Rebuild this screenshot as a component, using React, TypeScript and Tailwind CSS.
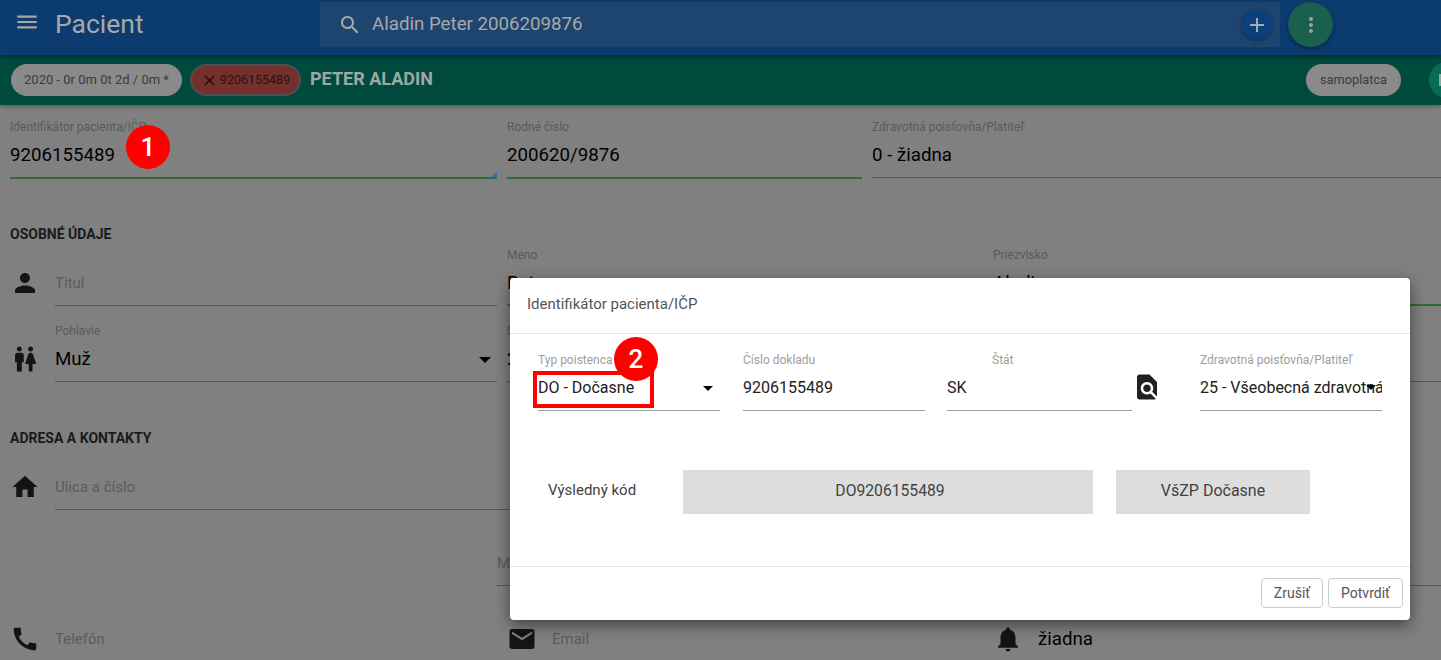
import type { ReactNode } from "react"

const font = "font-['Roboto',sans-serif]"

function Icon({ d, className }: { d: string; className: string }) {
  return (
    <svg viewBox="0 0 24 24" fill="currentColor" className={className}>
      <path d={d} />
    </svg>
  )
}

const icons = {
  menu: "M3 18h18v-2H3v2zm0-5h18v-2H3v2zm0-7v2h18V6H3z",
  search:
    "M15.5 14h-.79l-.28-.27C15.41 12.59 16 11.11 16 9.5 16 5.91 13.09 3 9.5 3S3 5.91 3 9.5 5.91 16 9.5 16c1.61 0 3.09-.59 4.23-1.57l.27.28v.79l5 4.99L20.49 19l-4.99-5zm-6 0C7.01 14 5 11.99 5 9.5S7.01 5 9.5 5 14 7.01 14 9.5 11.99 14 9.5 14z",
  add: "M19 13h-6v6h-2v-6H5v-2h6V5h2v6h6v2z",
  more: "M12 8c1.1 0 2-.9 2-2s-.9-2-2-2-2 .9-2 2 .9 2 2 2zm0 2c-1.1 0-2 .9-2 2s.9 2 2 2 2-.9 2-2-.9-2-2-2zm0 6c-1.1 0-2 .9-2 2s.9 2 2 2 2-.9 2-2-.9-2-2-2z",
  close:
    "M19 6.41L17.59 5 12 10.59 6.41 5 5 6.41 10.59 12 5 17.59 6.41 19 12 13.41 17.59 19 19 17.59 13.41 12z",
  person:
    "M12 12c2.21 0 4-1.79 4-4s-1.79-4-4-4-4 1.79-4 4 1.79 4 4 4zm0 2c-2.67 0-8 1.34-8 4v2h16v-2c0-2.66-5.33-4-8-4z",
  wc: "M5.5 22v-7.5H4V9c0-1.1.9-2 2-2h3c1.1 0 2 .9 2 2v5.5H9.5V22h-4zM18 22v-6h3l-2.54-7.63C18.18 7.55 17.42 7 16.56 7h-.12c-.86 0-1.63.55-1.9 1.37L12 16h3v6h3zM7.5 6c1.11 0 2-.89 2-2s-.89-2-2-2-2 .89-2 2 .89 2 2 2zm9 0c1.11 0 2-.89 2-2s-.89-2-2-2-2 .89-2 2 .89 2 2 2z",
  home: "M10 20v-6h4v6h5v-8h3L12 3 2 12h3v8z",
  phone:
    "M20.01 15.38c-1.23 0-2.42-.2-3.53-.56-.35-.12-.74-.03-1.01.24l-1.57 1.97c-2.83-1.35-5.48-3.9-6.89-6.83l1.95-1.66c.27-.28.35-.67.24-1.02-.37-1.11-.56-2.3-.56-3.53 0-.54-.45-.99-.99-.99H4.19C3.65 3 3 3.24 3 3.99 3 13.28 10.73 21 20.01 21c.71 0 .99-.63.99-1.18v-3.45c0-.54-.45-.99-.99-.99z",
  email:
    "M20 4H4c-1.1 0-1.99.9-1.99 2L2 18c0 1.1.9 2 2 2h16c1.1 0 2-.9 2-2V6c0-1.1-.9-2-2-2zm0 4l-8 5-8-5V6l8 5 8-5v2z",
  bell: "M12 22c1.1 0 2-.9 2-2h-4c0 1.1.89 2 2 2zm6-6v-5c0-3.07-1.64-5.64-4.5-6.32V4c0-.83-.67-1.5-1.5-1.5s-1.5.67-1.5 1.5v.68C7.63 5.36 6 7.92 6 11v5l-2 2v1h16v-1l-2-2z",
  find: "M20 19.59V8l-6-6H6c-1.1 0-1.99.9-1.99 2L4 20c0 1.1.89 2 1.99 2H18c.45 0 .85-.15 1.19-.4l-4.43-4.43c-.8.52-1.74.83-2.76.83-2.76 0-5-2.24-5-5s2.24-5 5-5 5 2.24 5 5c0 1.02-.31 1.96-.83 2.75L20 19.59zM9 13c0 1.66 1.34 3 3 3s3-1.34 3-3-1.34-3-3-3-3 1.34-3 3z",
}

function Caret({ className }: { className: string }) {
  return <div className={`h-0 w-0 border-x-[5px] border-t-[5px] border-x-transparent border-t-black ${className}`} />
}

function Field({
  label,
  value,
  placeholder,
  green,
  className,
  children,
}: {
  label?: string
  value?: string
  placeholder?: string
  green?: boolean
  className: string
  children?: ReactNode
}) {
  return (
    <div className={`relative h-[60px] ${green ? "border-b-2 border-[#2f6b34]" : "border-b border-[#555555]"} ${className}`}>
      <div className="h-4 text-[12px] leading-4 text-[#5a5a5a]">{label}</div>
      {value && <div className="mt-[6px] h-7 text-[18.7px] leading-7 text-black">{value}</div>}
      {placeholder && <div className="mt-[9px] text-[15px] leading-6 text-[#5c5c5c]">{placeholder}</div>}
      {children}
    </div>
  )
}

function RowIcon({ d, className }: { d: string; className: string }) {
  return <Icon d={d} className={`mt-[22px] size-[30px] shrink-0 text-[#141414] ${className}`} />
}

function DialogField({ label, value, className, labelClass, children }: { label: string; value: string; className: string; labelClass?: string; children?: ReactNode }) {
  return (
    <div className={`relative h-[59px] shrink-0 border-b border-[#9e9e9e] ${className}`}>
      <div className={`h-4 text-[12px] leading-4 text-[#9e9e9e] ${labelClass ?? ""}`}>{label}</div>
      <div className="mt-[8px] overflow-hidden whitespace-nowrap text-[16px] leading-6 text-[#212121]">{value}</div>
      {children}
    </div>
  )
}

function Badge({ n, className }: { n: string; className: string }) {
  return (
    <div className={`absolute z-30 flex size-[44px] items-center justify-center rounded-full bg-[#ff0000] text-[26px] font-medium text-white ${className}`}>
      {n}
    </div>
  )
}

export default function App() {
  return (
    <div className={`relative h-[660px] w-[1441px] overflow-hidden bg-[#808080] ${font}`}>
      {/* app bar */}
      <header className="relative z-[2] flex h-[55px] items-start bg-[#0c3b70] shadow-[0_2px_4px_rgba(0,0,0,0.35)]">
        <Icon d={icons.menu} className="ml-[14px] mt-[9px] size-[26px] shrink-0 text-[#a8a8a8]" />
        <div className="ml-[15px] w-[265px] text-[26.5px] leading-[47px] text-[#a8a8a8]">Pacient</div>
        <div className="mt-[2px] flex h-[45px] w-[960px] items-center bg-[#1e4570] pl-[18px] pr-2">
          <Icon d={icons.search} className="size-6 text-[#a8a8a8]" />
          <span className="ml-[10px] text-[18.7px] text-[#a8a8a8]">Aladin Peter 2006209876</span>
          <div className="ml-auto flex size-[30px] items-center justify-center rounded-full bg-[#0b3f7d] shadow-[0_1px_4px_rgba(0,0,0,0.4)]">
            <Icon d={icons.add} className="size-6 text-[#a8acb2]" />
          </div>
        </div>
        <div className="ml-[8px] mt-[2px] flex size-[45px] items-center justify-center rounded-full bg-[#19604f] shadow-[0_2px_4px_rgba(0,0,0,0.35)]">
          <Icon d={icons.more} className="size-6 text-[#a0a0a0]" />
        </div>
      </header>

      {/* patient strip */}
      <div className="relative z-[1] flex h-[50px] items-center bg-[#00493d] pl-[11px] shadow-[0_2px_4px_rgba(0,0,0,0.25)]">
        <div className="flex h-8 w-[171px] items-center justify-center rounded-full bg-[#8a8a8a] text-[13px] text-[#3a3a3a]">2020 - 0r 0m 0t 2d / 0m *</div>
        <div className="ml-2 flex h-8 w-[111px] items-center justify-center rounded-full border-2 border-[#4e4e50] bg-[#74302c] text-[12.5px] text-[#2a1210]">
          <Icon d={icons.close} className="mr-[2px] size-[17px] text-[#1e0f0d]" />
          9206155489
        </div>
        <div className="ml-[9px] mb-[3px] text-[18px] font-bold text-[#9ca8a4]">PETER ALADIN</div>
        <div className="ml-auto flex h-8 w-[95px] items-center justify-center rounded-full bg-[#8a8a8a] text-[12.8px] text-[#3a3a3a]">samoplatca</div>
        <div className="ml-[28px] mr-[-24px] flex size-9 shrink-0 items-center rounded-full bg-[#0a6a58] pl-[10px]">
          <div className="h-3 w-2 bg-[#8fa8a2]" />
        </div>
      </div>

      {/* form */}
      <main className="pl-[10px] pt-[14px]">
        <div className="flex gap-[10px]">
          <Field label="Identifikátor pacienta/IČP" value="9206155489" green className="w-[487px]">
            <div className="absolute bottom-0 right-0 h-0 w-0 border-b-[6px] border-l-[6px] border-b-[#3a72b0] border-l-transparent" />
          </Field>
          <Field label="Rodné číslo" value="200620/9876" green className="w-[355px]" />
          <Field label="Zdravotná poisťovňa/Platiteľ" value="0 - žiadna" className="flex-1 !h-[59px]" />
        </div>

        <h2 className="mt-[45px] text-[14px] font-bold leading-5 text-[#1a1a1a]">OSOBNÉ ÚDAJE</h2>
        <div className="mt-[2px] flex">
          <RowIcon d={icons.person} className="mr-[15px]" />
          <Field placeholder="Titul" className="w-[442px]" />
          <Field label="Meno" value="Peter" green className="ml-[10px] w-[476px] pt-px" />
          <Field label="Priezvisko" value="Aladin" green className="ml-[10px] flex-1 pt-px" />
        </div>
        <div className="mt-[16px] flex">
          <RowIcon d={icons.wc} className="mr-[15px]" />
          <Field label="Pohlavie" value="Muž" className="w-[442px] pt-px">
            <Caret className="absolute right-[6px] top-[35px] border-x-[6px] border-t-[6px] border-t-[#141414]" />
          </Field>
          <Field label="Dátum narodenia" value="20.06.2020" className="ml-[10px] w-[476px] pt-px" />
          <Field className="ml-[10px] flex-1" />
        </div>

        <h2 className="mt-[46px] text-[14px] font-bold leading-5 text-[#1a1a1a]">ADRESA A KONTAKTY</h2>
        <div className="mt-[2px] flex">
          <RowIcon d={icons.home} className="mr-[15px]" />
          <Field placeholder="Ulica a číslo" className="w-[700px]" />
        </div>
        <div className="mt-[16px] flex pl-[487px]">
          <Field placeholder="Mesto" className="flex-1" />
        </div>
        <div className="mt-[16px] flex">
          <RowIcon d={icons.phone} className="mr-[15px]" />
          <Field placeholder="Telefón" className="w-[422px]" />
          <RowIcon d={icons.email} className="ml-[30px] mr-[15px]" />
          <Field placeholder="Email" className="w-[420px]" />
          <RowIcon d={icons.bell} className="ml-[21px] mr-[15px]" />
          <div className="mt-[25px] text-[18.7px] leading-6 text-black">žiadna</div>
        </div>
      </main>

      {/* dialog */}
      <section className="absolute left-[510px] top-[278px] z-20 h-[342px] w-[900px] rounded-[4px] bg-white shadow-[0_5px_15px_rgba(0,0,0,0.5)]">
        <div className="flex h-[56px] items-center border-b border-[#e5e5e5] pb-[2px] pl-[17px] text-[15px] text-[#555555]">Identifikátor pacienta/IČP</div>
        <div className="flex pl-[28px] pt-[18px]">
          <DialogField label="Typ poistenca" value="DO - Dočasne" className="w-[182px]">
            <Caret className="absolute right-[7px] top-[34px]" />
          </DialogField>
          <DialogField label="Číslo dokladu" value="9206155489" className="ml-[23px] w-[182px]" />
          <DialogField label="Štát" value="SK" labelClass="pl-[45px]" className="ml-[22px] w-[185px]" />
          <Icon d={icons.find} className="mt-[20px] size-[30px] shrink-0 text-[#212121]" />
          <DialogField label="Zdravotná poisťovňa/Platiteľ" value="25 - Všeobecná zdravotná" className="ml-[38px] w-[182px]">
            <Caret className="absolute right-[6px] top-[33px] border-t-[#212121]" />
          </DialogField>
        </div>
        <div className="mt-[59px] flex h-[44px] items-center pl-[38px] text-[#424242]">
          <div className="mb-[3px] w-[135px] text-[15px]">Výsledný kód</div>
          <div className="flex h-full w-[410px] items-center justify-center bg-[#dddddd] pb-[2px] pl-[4px] text-[15.7px]">DO9206155489</div>
          <div className="ml-[23px] flex h-full w-[194px] items-center justify-center bg-[#dddddd] pb-[2px] text-[16px]">VšZP Dočasne</div>
        </div>
        <div className="mt-[52px] flex h-[54px] justify-end gap-[5px] border-t border-[#e5e5e5] pr-[7px] pt-[11px] text-[14px] text-[#555555]">
          <button className="h-[30px] w-[62px] rounded-[4px] border border-[#cccccc]">Zrušiť</button>
          <button className="h-[30px] w-[75px] rounded-[4px] border border-[#cccccc]">Potvrdiť</button>
        </div>
      </section>

      {/* callouts */}
      <Badge n="1" className="left-[126px] top-[125px]" />
      <Badge n="2" className="left-[614px] top-[337px]" />
      <div className="absolute left-[533px] top-[371px] z-[25] h-[37px] w-[121px] border-4 border-[#ff0000]" />
    </div>
  )
}
